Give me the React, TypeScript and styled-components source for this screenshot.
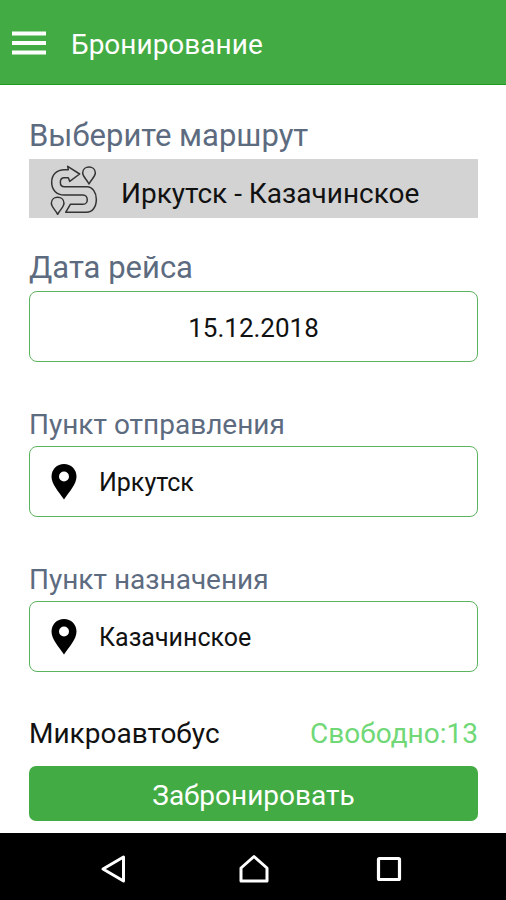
import React from "react";
import styled, { createGlobalStyle } from "styled-components";

const GlobalStyle = createGlobalStyle`
  *, *::before, *::after { box-sizing: border-box; }
  body { margin: 0; background: #fff; }
  body, button, input { font-family: Roboto, "Noto Sans", sans-serif; }
`;

const Screen = styled.div`
  min-height: 100vh;
  display: flex;
  flex-direction: column;
`;

const AppBar = styled.header`
  display: flex;
  align-items: center;
  gap: 24px;
  height: 85px;
  padding: 1px 12px 0;
  background: #43ab43;
  border-bottom: 1px solid #1f9a22;
`;

const IconButton = styled.button`
  display: flex;
  padding: 0;
  border: 0;
  background: none;
  color: #fff;
  cursor: pointer;
`;

const Title = styled.h1`
  margin: 0;
  padding-top: 4px;
  font-size: 28px;
  font-weight: 400;
  line-height: 36px;
  color: #fff;
`;

const Form = styled.form`
  flex: 1;
  display: flex;
  flex-direction: column;
  padding: 30px 28px 12px 29px;
`;

const Field = styled.div<{ $gap: number }>`
  display: flex;
  flex-direction: column;
  gap: 2px;
  margin-bottom: ${(p) => p.$gap}px;
`;

const Label = styled.label<{ $small?: boolean }>`
  font-size: ${(p) => (p.$small ? 28 : 31)}px;
  line-height: ${(p) => (p.$small ? 38 : 42)}px;
  color: #5d6b80;
`;

const RouteButton = styled.button`
  display: flex;
  align-items: center;
  gap: 16px;
  height: 59px;
  padding: 0 16px;
  border: 0;
  background: #d3d3d3;
  color: #111;
  font-size: 28px;
  text-align: left;
  cursor: pointer;
`;

const RouteName = styled.span`
  padding-top: 9px;
`;

const InputFrame = styled.div`
  display: flex;
  align-items: center;
  gap: 20px;
  height: 71px;
  padding: 0 20px;
  border: 1px solid #5cb45e;
  border-radius: 8px;
  background: #fff;
`;

const TextInput = styled.input<{ $centered?: boolean }>`
  flex: 1;
  min-width: 0;
  padding: 2px 0 0;
  border: 0;
  outline: 0;
  background: none;
  color: #111;
  font-size: ${(p) => (p.$centered ? 26 : 25)}px;
  text-align: ${(p) => (p.$centered ? "center" : "left")};
`;

const Summary = styled.div`
  display: flex;
  justify-content: space-between;
  margin-bottom: 14px;
  font-size: 28px;
  line-height: 36px;
  color: #111;
`;

const Free = styled.span`
  color: #70d876;
`;

const Submit = styled.button`
  height: 55px;
  padding: 4px 0 0;
  border: 0;
  border-radius: 7px;
  background: #43ab43;
  color: #fff;
  font-size: 28px;
  cursor: pointer;
`;

const SystemBar = styled.nav`
  display: flex;
  justify-content: center;
  gap: 106px;
  align-items: center;
  height: 67px;
  padding-top: 4px;
  background: #000;
`;

const MenuIcon = () => (
  <svg width="35" height="24" viewBox="0 0 35 24" aria-hidden="true">
    <path d="M0 2.5h34M0 12h34M0 21.5h34" stroke="currentColor" strokeWidth="4" />
  </svg>
);

const RouteIcon = () => (
  <svg width="60" height="58" viewBox="0 3 180 174" fill="none" stroke="#333" strokeWidth="4.5" strokeLinejoin="round" aria-hidden="true">
    <path d="M70 32L68 22L104 45L74 67L70 56H58C42 56 42 83 58 83H126C142 83 154 100 154 121C154 145 142 160 124 160H62L76 136H114C131 136 131 108 114 108H58C34 108 20 92 20 70C20 46 36 32 58 32Z" />
    <path d="M132 75C124 60 113 53 113 42C113 18 151 18 151 42C151 53 140 60 132 75Z" />
    <path d="M38 166C30 151 19 144 19 133C19 109 57 109 57 133C57 144 46 151 38 166Z" />
  </svg>
);

const PinIcon = () => (
  <svg width="29" height="36" viewBox="0 0 29 36" aria-hidden="true">
    <path fillRule="evenodd" d="M14 0C7 0 1.500 5.400 1.500 12.500C1.500 20 8.500 27.500 14 35.500C19.500 27.500 26.500 20 26.500 12.500C26.500 5.400 21 0 14 0ZM14 7.500A5 5 0 1 1 14 17.500A5 5 0 1 1 14 7.500Z" />
  </svg>
);

const BackIcon = () => (
  <svg width="34" height="30" viewBox="0 0 34 30" fill="none" stroke="currentColor" strokeWidth="3" strokeLinejoin="round" aria-hidden="true">
    <path d="M24.500 3V27L4 15Z" />
  </svg>
);

const HomeIcon = () => (
  <svg width="30" height="30" viewBox="0 0 30 30" fill="none" stroke="currentColor" strokeWidth="3" strokeLinejoin="round" aria-hidden="true">
    <path d="M2 27V14L15 2.500L28 14V27Z" />
  </svg>
);

const RecentIcon = () => (
  <svg width="32" height="26" viewBox="0 0 32 26" fill="none" stroke="currentColor" strokeWidth="3.200" strokeLinejoin="round" aria-hidden="true">
    <rect x="3.500" y="2.500" width="21" height="21" rx="1" />
  </svg>
);

export default function App() {
  return (
    <Screen>
      <GlobalStyle />
      <AppBar>
        <IconButton type="button" aria-label="Меню">
          <MenuIcon />
        </IconButton>
        <Title>Бронирование</Title>
      </AppBar>
      <Form onSubmit={(e) => e.preventDefault()}>
        <Field $gap={29}>
          <Label htmlFor="route">Выберите маршрут</Label>
          <RouteButton id="route" type="button">
            <RouteIcon />
            <RouteName>Иркутск - Казачинское</RouteName>
          </RouteButton>
        </Field>
        <Field $gap={44}>
          <Label htmlFor="date">Дата рейса</Label>
          <InputFrame>
            <TextInput id="date" $centered defaultValue="15.12.2018" />
          </InputFrame>
        </Field>
        <Field $gap={44}>
          <Label htmlFor="from" $small>Пункт отправления</Label>
          <InputFrame>
            <PinIcon />
            <TextInput id="from" defaultValue="Иркутск" />
          </InputFrame>
        </Field>
        <Field $gap={44}>
          <Label htmlFor="to" $small>Пункт назначения</Label>
          <InputFrame>
            <PinIcon />
            <TextInput id="to" defaultValue="Казачинское" />
          </InputFrame>
        </Field>
        <Summary>
          <span>Микроавтобус</span>
          <Free>Свободно:13</Free>
        </Summary>
        <Submit type="submit">Забронировать</Submit>
      </Form>
      <SystemBar aria-label="Система">
        <IconButton type="button" aria-label="Назад">
          <BackIcon />
        </IconButton>
        <IconButton type="button" aria-label="Домой">
          <HomeIcon />
        </IconButton>
        <IconButton type="button" aria-label="Недавние">
          <RecentIcon />
        </IconButton>
      </SystemBar>
    </Screen>
  );
}
